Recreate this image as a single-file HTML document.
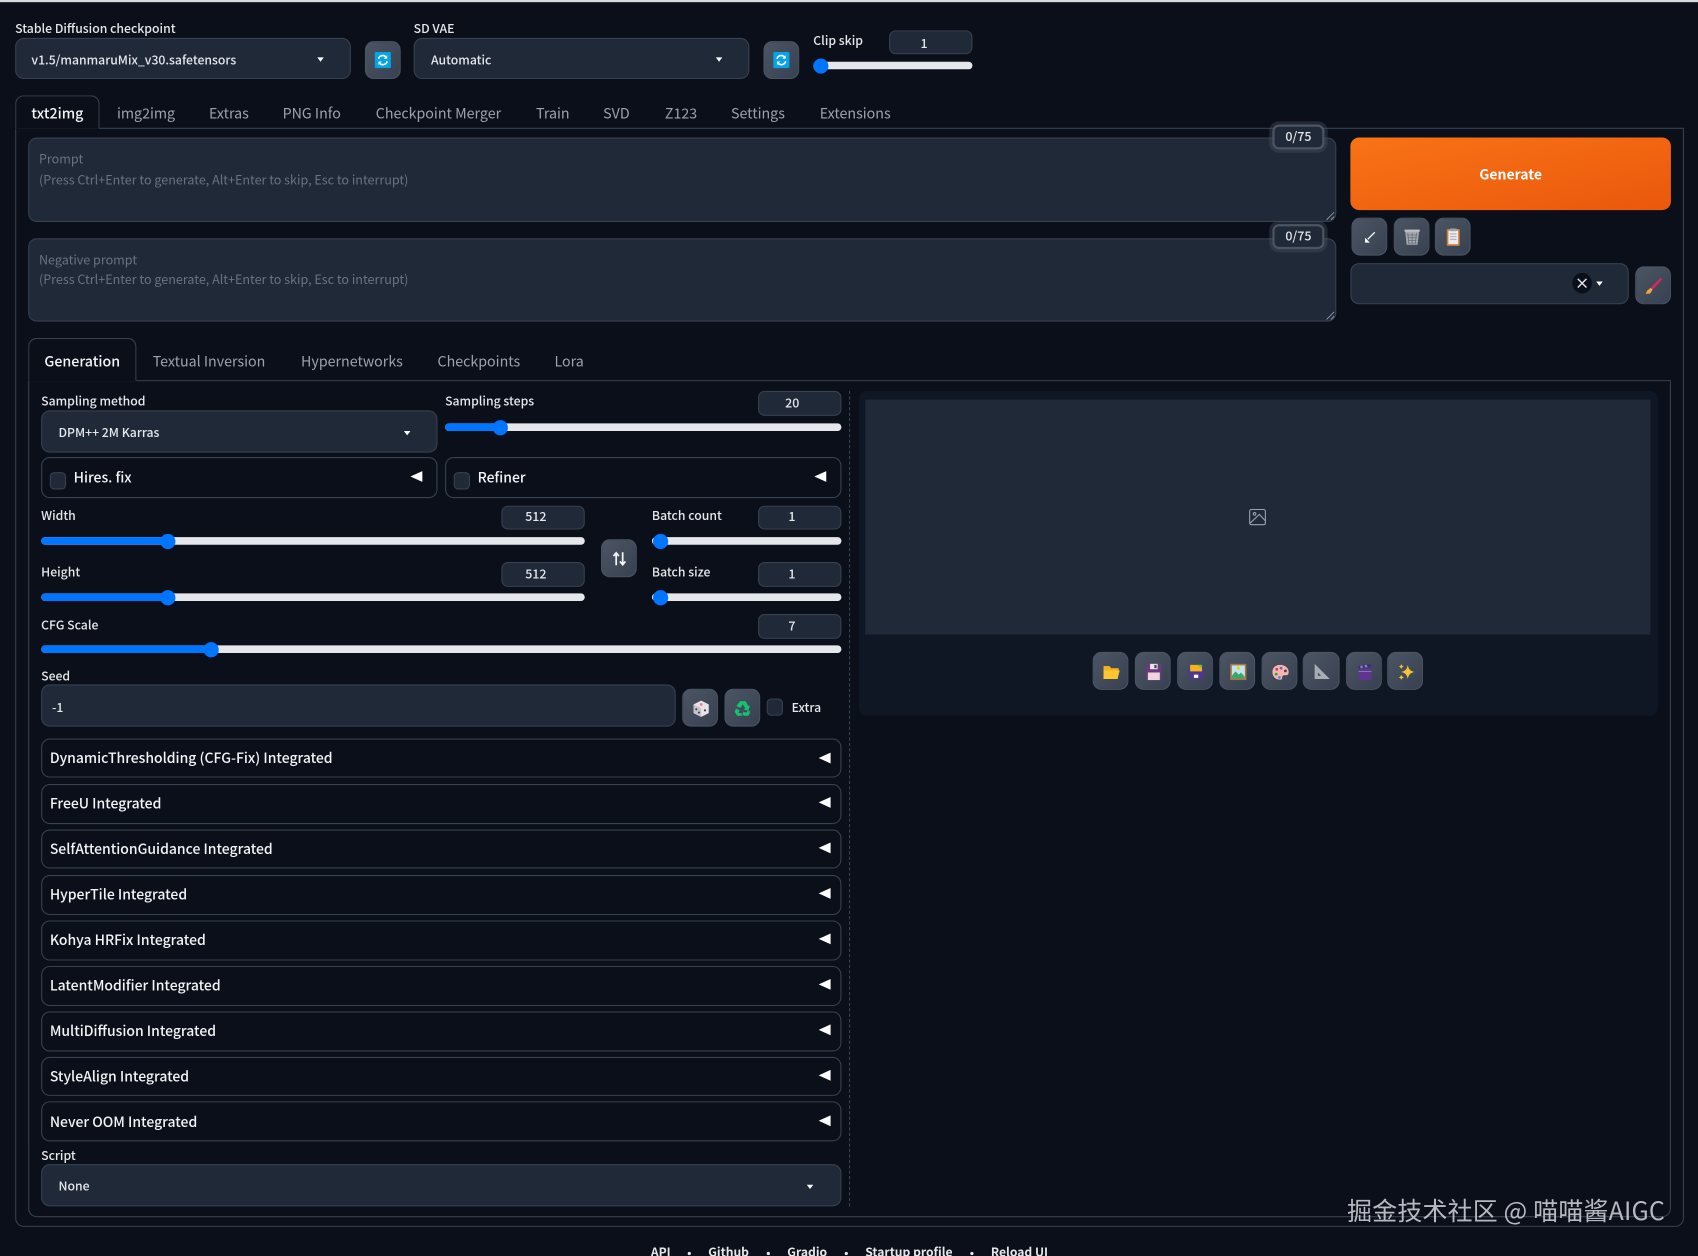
<!DOCTYPE html>
<html><head><meta charset="utf-8"><style>
html,body{margin:0;padding:0;background:#0b0f19;width:1698px;height:1256px;overflow:hidden}
#w{position:absolute;left:0;top:0;width:1568px;height:1160px;transform:scale(1.08291);transform-origin:0 0;font-family:"Noto Sans CJK SC","Liberation Sans",sans-serif;color:#f3f4f6;overflow:hidden}
#w div,#w svg,#w span{position:absolute;box-sizing:border-box}
.t{white-space:nowrap;line-height:1;transform:translateY(-50%);font-size:11.3px;letter-spacing:0;color:#e5e7eb;font-weight:500;margin-top:1.6px}
.tab{font-size:13.15px;color:#9ca3af;font-weight:400;margin-top:-.3px}
.ph{color:#6b7280;font-size:11.6px;font-weight:400;margin-top:1.8px}
.dd{background:#1f2937;border:1px solid #374151;border-radius:8px}
.arr{width:0;height:0;border-left:3.5px solid transparent;border-right:3.5px solid transparent;border-top:4px solid #fff}
.btn{background:linear-gradient(to bottom right,#4b5563,#374151);border:1px solid #4b5563;border-radius:8px;width:33px;height:35px}
.num{background:#1f2937;border:1px solid #374151;border-radius:6px;width:78px;height:22px}
.tr{height:7px;background:#e5e7eb;border-radius:4px}
.fill{left:0;top:0;height:7px;background:#0075ff;border-radius:4px}
.th{width:14px;height:14px;border-radius:50%;background:#0075ff;top:-3.5px}
.box{border:1px solid #374151;border-radius:8px}
.acc{left:38px;width:739px;border:1px solid #374151;border-radius:8px}
.tri{width:0;height:0;border-top:5px solid transparent;border-bottom:5px solid transparent;border-right:11px solid #fff}
.cb{width:15px;height:16px;background:#1f2937;border:1px solid #374151;border-radius:4px}
.acct{font-size:12.9px;color:#f3f4f6;margin-top:-.2px}
.n{font-size:11.5px;margin-top:.8px}
.foot{font-size:11.2px;font-weight:700;color:#e5e7eb;margin-top:0}
.dot{width:3px;height:3px;border-radius:50%;background:#e5e7eb;top:1156px}
.cnt{width:48px;height:23px;background:#1f2937;border:2px solid #4b5563;border-radius:6px;box-shadow:0 0 0 3px rgba(75,85,99,.35);font-size:11.5px;font-weight:500;text-align:center;line-height:19px;color:#e5e7eb}
</style></head><body><div id="w">
<div style="left:0;top:0;width:1568px;height:2px;background:#d8dae0"></div>

<!-- top row -->
<div class="t" style="left:14px;top:25px">Stable Diffusion checkpoint</div>
<div class="dd" style="left:14px;top:35px;width:310px;height:38px"></div>
<div class="t" style="left:29px;top:54px">v1.5/manmaruMix_v30.safetensors</div>
<div class="arr" style="left:293px;top:53px"></div>
<div class="btn" style="left:337px;top:38px"><svg style="left:8px;top:9px" width="15" height="15" viewBox="0 0 15 15"><rect width="15" height="15" rx="1.5" fill="#04a5e8"/><path d="M3.5 6.5A4 4 0 0 1 11 5.5M11.5 8.5A4 4 0 0 1 4 9.5" stroke="#fff" stroke-width="1.5" fill="none"/><path d="M11.5 3v3.2H8.4zM3.5 12V8.8h3.1z" fill="#fff"/></svg></div>

<div class="t" style="left:382px;top:25px">SD VAE</div>
<div class="dd" style="left:382px;top:35px;width:310px;height:38px"></div>
<div class="t" style="left:398px;top:54px">Automatic</div>
<div class="arr" style="left:661px;top:53px"></div>
<div class="btn" style="left:705px;top:38px"><svg style="left:8px;top:9px" width="15" height="15" viewBox="0 0 15 15"><rect width="15" height="15" rx="1.5" fill="#04a5e8"/><path d="M3.5 6.5A4 4 0 0 1 11 5.5M11.5 8.5A4 4 0 0 1 4 9.5" stroke="#fff" stroke-width="1.5" fill="none"/><path d="M11.5 3v3.2H8.4zM3.5 12V8.8h3.1z" fill="#fff"/></svg></div>

<div class="t" style="left:751px;top:36px">Clip skip</div>
<div class="num" style="left:821px;top:28px;width:77px"></div>
<div class="t n" style="left:850px;top:40px">1</div>
<div class="tr" style="left:751px;top:57px;width:147px"><div class="th" style="left:0"></div></div>

<!-- main tabs -->
<div style="left:14px;top:118px;width:1541px;height:1015px;border:1px solid #374151;border-radius:0 0 8px 8px"></div>
<div style="left:14px;top:88px;width:78px;height:31px;border:1px solid #374151;border-bottom:1px solid #0b0f19;border-radius:8px 8px 0 0;background:#0b0f19"></div>
<div class="t tab" style="left:29px;top:104px;color:#f3f4f6;font-weight:500">txt2img</div>
<div class="t tab" style="left:108px;top:104px">img2img</div>
<div class="t tab" style="left:193px;top:104px">Extras</div>
<div class="t tab" style="left:261px;top:104px">PNG Info</div>
<div class="t tab" style="left:347px;top:104px">Checkpoint Merger</div>
<div class="t tab" style="left:495px;top:104px">Train</div>
<div class="t tab" style="left:557px;top:104px">SVD</div>
<div class="t tab" style="left:614px;top:104px">Z123</div>
<div class="t tab" style="left:675px;top:104px">Settings</div>
<div class="t tab" style="left:757px;top:104px">Extensions</div>

<!-- prompts -->
<div class="dd" style="left:26px;top:127px;width:1208px;height:78px"></div>
<div class="t ph" style="left:36px;top:146px">Prompt</div>
<div class="t ph" style="left:36px;top:165px">(Press Ctrl+Enter to generate, Alt+Enter to skip, Esc to interrupt)</div>
<svg style="left:1224px;top:195px" width="9" height="9" viewBox="0 0 9 9"><path d="M1 8L8 1M5 8L8 5" stroke="#9ca3af" stroke-width=".8"/></svg>
<div class="cnt" style="left:1175px;top:115px">0/75</div>

<div class="dd" style="left:26px;top:220px;width:1208px;height:77px"></div>
<div class="t ph" style="left:36px;top:239px">Negative prompt</div>
<div class="t ph" style="left:36px;top:257px">(Press Ctrl+Enter to generate, Alt+Enter to skip, Esc to interrupt)</div>
<svg style="left:1224px;top:287px" width="9" height="9" viewBox="0 0 9 9"><path d="M1 8L8 1M5 8L8 5" stroke="#9ca3af" stroke-width=".8"/></svg>
<div class="cnt" style="left:1175px;top:207px">0/75</div>

<!-- generate -->
<div style="left:1247px;top:127px;width:296px;height:67px;border-radius:8px;background:linear-gradient(to bottom right,#f97316,#ea580c)"></div>
<div class="t" style="left:1247px;width:296px;text-align:center;top:161px;font-size:12.9px;font-weight:700;color:#fff;margin-top:.3px">Generate</div>
<div class="btn" style="left:1248px;top:201px"><svg style="left:8px;top:9px" width="16" height="16" viewBox="0 0 16 16"><path d="M12.500 3.500L6 10" stroke="#fff" stroke-width="1.200"/><path d="M3.500 13V8.500L8 13z" fill="#fff"/></svg></div>
<div class="btn" style="left:1287px;top:201px"><svg style="left:7px;top:8px" width="18" height="18" viewBox="0 0 18 18"><path d="M2.500 3h13l-1.500 13h-10z" fill="#a6aaae"/><path d="M5 5l1 10M9 5v10M13 5l-1 10M4 7h10M4.500 9.500h9M5 12h8M5 14.500h8" stroke="#676d76" stroke-width=".7"/><rect x="2" y="2" width="14" height="2" fill="#bdc0c4"/></svg></div>
<div class="btn" style="left:1325px;top:201px"><svg style="left:8px;top:8px" width="16" height="18" viewBox="0 0 16 18"><rect x="2" y="1.500" width="12" height="15.500" rx="1" fill="#c8803f"/><rect x="3.500" y="3" width="9" height="12.500" fill="#f1ecec"/><path d="M5 6h6M5 8.500h6M5 11h6" stroke="#a9a9b4" stroke-width="1"/><rect x="5" y="1" width="6" height="2.500" fill="#9ca3af"/></svg></div>
<div class="dd" style="left:1247px;top:243px;width:257px;height:38px"></div>
<div style="left:1452px;top:252px;width:18px;height:19px;border-radius:50%;background:#0b0f19"></div>
<svg style="left:1456px;top:256px" width="10" height="11" viewBox="0 0 10 11"><path d="M1 1.500l8 8M9 1.500l-8 8" stroke="#e5e7eb" stroke-width="1.300"/></svg>
<div class="arr" style="left:1474px;top:260px"></div>
<div class="btn" style="left:1510px;top:246px"><svg style="left:7px;top:8px" width="18" height="18" viewBox="0 0 18 18"><path d="M15.500 1.500L6.500 10.500l1.800 1.800L16.800 3z" fill="#e0245e"/><path d="M6.300 10.800L3 13.500 1.800 16.500l4-.5 2.300-3.500z" fill="#f4a63a"/></svg></div>

<!-- sub tabs -->
<div style="left:26px;top:351px;width:1517px;height:773px;border:1px solid #374151;border-radius:0 0 8px 8px"></div>
<div style="left:26px;top:312px;width:100px;height:40px;border:1px solid #374151;border-bottom:1px solid #0b0f19;border-radius:8px 8px 0 0;background:#0b0f19"></div>
<div class="t tab" style="left:41px;top:333px;color:#f3f4f6;font-weight:500">Generation</div>
<div class="t tab" style="left:141px;top:333px">Textual Inversion</div>
<div class="t tab" style="left:278px;top:333px">Hypernetworks</div>
<div class="t tab" style="left:404px;top:333px">Checkpoints</div>
<div class="t tab" style="left:512px;top:333px">Lora</div>

<!-- sampling -->
<div class="t" style="left:38px;top:369px">Sampling method</div>
<div class="dd" style="left:38px;top:379px;width:366px;height:39px"></div>
<div class="t" style="left:54px;top:398px">DPM++ 2M Karras</div>
<div class="arr" style="left:373px;top:398px"></div>
<div class="t" style="left:411px;top:369px">Sampling steps</div>
<div class="num" style="left:700px;top:361px;width:77px;height:23px"></div>
<div class="t n" style="left:725px;top:372.500px">20</div>
<div class="tr" style="left:411px;top:391px;width:366px"><div class="fill" style="width:52px"></div><div class="th" style="left:44px"></div></div>

<div class="box" style="left:38px;top:422px;width:366px;height:38px"></div>
<div class="cb" style="left:46px;top:436px"></div>
<div class="t acct" style="left:68px;top:441px">Hires. fix</div>
<div class="tri" style="left:379px;top:435px"></div>
<div class="box" style="left:411px;top:422px;width:366px;height:38px"></div>
<div class="cb" style="left:419px;top:436px"></div>
<div class="t acct" style="left:441px;top:441px">Refiner</div>
<div class="tri" style="left:752px;top:435px"></div>

<div class="t" style="left:38px;top:475px">Width</div>
<div class="num" style="left:463px;top:467px;width:77px;height:22px"></div>
<div class="t n" style="left:485px;top:477.500px">512</div>
<div class="tr" style="left:38px;top:496px;width:502px"><div class="fill" style="width:118px"></div><div class="th" style="left:110px"></div></div>
<div class="t" style="left:38px;top:527px">Height</div>
<div class="num" style="left:463px;top:519px;width:77px;height:23px"></div>
<div class="t n" style="left:485px;top:530px">512</div>
<div class="tr" style="left:38px;top:548px;width:502px"><div class="fill" style="width:118px"></div><div class="th" style="left:110px"></div></div>
<div class="btn" style="left:555px;top:498px;height:35px"><svg style="left:9px;top:10px" width="14" height="14" viewBox="0 0 14 14"><path d="M4 13V2M1.500 4.500L4 1.500l2.500 3M10 1v11M7.500 9.500l2.500 3 2.500-3" stroke="#f3f4f6" stroke-width="1.600" fill="none"/></svg></div>
<div class="t" style="left:602px;top:475px">Batch count</div>
<div class="num" style="left:700px;top:467px;width:77px;height:22px"></div>
<div class="t n" style="left:728px;top:477.500px">1</div>
<div class="tr" style="left:602px;top:496px;width:175px"><div class="th" style="left:1px"></div></div>
<div class="t" style="left:602px;top:527px">Batch size</div>
<div class="num" style="left:700px;top:519px;width:77px;height:23px"></div>
<div class="t n" style="left:728px;top:530px">1</div>
<div class="tr" style="left:602px;top:548px;width:175px"><div class="th" style="left:1px"></div></div>
<div class="t" style="left:38px;top:576px">CFG Scale</div>
<div class="num" style="left:700px;top:567px;width:77px;height:23px"></div>
<div class="t n" style="left:728px;top:578px">7</div>
<div class="tr" style="left:38px;top:596px;width:739px"><div class="fill" style="width:158px"></div><div class="th" style="left:150px"></div></div>

<div class="t" style="left:38px;top:623px">Seed</div>
<div class="dd" style="left:38px;top:632px;width:586px;height:39px"></div>
<div class="t" style="left:48px;top:652px">-1</div>
<div class="btn" style="left:630px;top:636px"><svg style="left:8px;top:9px" width="17" height="17" viewBox="0 0 17 17"><path d="M8.500 1L15.500 4.500V12.500L8.500 16L1.500 12.500V4.500z" fill="#e8e3e6"/><path d="M1.500 4.500L8.500 8V16L1.500 12.500z" fill="#c9c3c8"/><circle cx="8.500" cy="4.500" r="1.300" fill="#e87d9c"/><circle cx="4" cy="9" r="1" fill="#4a3b57"/><circle cx="6.500" cy="12" r="1" fill="#4a3b57"/><circle cx="12" cy="10" r="1" fill="#4a3b57"/></svg></div>
<div class="btn" style="left:669px;top:636px"><svg style="left:7px;top:8px" width="18" height="18" viewBox="0 0 18 18"><path d="M6.500 2.500h5L14 7l1.500-.5L14 11.500 9.500 10l1.800-.8L9 5.300 6.800 8.800 3 7z" fill="#16c172"/><path d="M2.500 9.200l3.500 1.600L4.800 13.500H8V16H3.800L1.500 12.500zM9.500 12.500l-.1-1.800L8.600 17l-.1-2.500L10 16h4l2-3.800-2.300-1.200-1.200 2z" fill="#16c172"/></svg></div>
<div class="cb" style="left:708px;top:645px"></div>
<div class="t" style="left:731px;top:652px">Extra</div>

<!-- accordions -->
<div class="acc" style="top:682px;height:36px"></div><div class="t acct" style="left:46px;top:700px">DynamicThresholding (CFG-Fix) Integrated</div><div class="tri" style="left:756px;top:695px"></div>
<div class="acc" style="top:724px;height:37px"></div><div class="t acct" style="left:46px;top:742px">FreeU Integrated</div><div class="tri" style="left:756px;top:736px"></div>
<div class="acc" style="top:766px;height:36px"></div><div class="t acct" style="left:46px;top:784px">SelfAttentionGuidance Integrated</div><div class="tri" style="left:756px;top:778px"></div>
<div class="acc" style="top:808px;height:37px"></div><div class="t acct" style="left:46px;top:826px">HyperTile Integrated</div><div class="tri" style="left:756px;top:820px"></div>
<div class="acc" style="top:850px;height:37px"></div><div class="t acct" style="left:46px;top:868px">Kohya HRFix Integrated</div><div class="tri" style="left:756px;top:862px"></div>
<div class="acc" style="top:892px;height:37px"></div><div class="t acct" style="left:46px;top:910px">LatentModifier Integrated</div><div class="tri" style="left:756px;top:904px"></div>
<div class="acc" style="top:934px;height:37px"></div><div class="t acct" style="left:46px;top:952px">MultiDiffusion Integrated</div><div class="tri" style="left:756px;top:946px"></div>
<div class="acc" style="top:976px;height:36px"></div><div class="t acct" style="left:46px;top:994px">StyleAlign Integrated</div><div class="tri" style="left:756px;top:988px"></div>
<div class="acc" style="top:1017px;height:37px"></div><div class="t acct" style="left:46px;top:1036px">Never OOM Integrated</div><div class="tri" style="left:756px;top:1030px"></div>

<div class="t" style="left:38px;top:1066px">Script</div>
<div class="dd" style="left:38px;top:1075px;width:739px;height:39px"></div>
<div class="t" style="left:54px;top:1094px">None</div>
<div class="arr" style="left:745px;top:1094px"></div>

<div style="left:784px;top:361px;width:0;height:753px;border-left:1px dashed #374151"></div>

<!-- output panel -->
<div style="left:793px;top:361px;width:738px;height:300px;background:#101724;border-radius:8px"></div>
<div style="left:799px;top:369px;width:725px;height:217px;background:#1f2937"></div>
<svg style="left:1153px;top:469px" width="17" height="17" viewBox="0 0 17 17" fill="none" stroke="#9ca3af" stroke-width="1"><rect x="1" y="1.500" width="14.500" height="14" rx="1.500"/><circle cx="5.500" cy="5.500" r="1.200"/><path d="M1.500 14L10 6l5.500 6"/></svg>

<div class="btn" style="left:1009px;top:602px"><svg style="left:8px;top:9px" width="17" height="17" viewBox="0 0 17 17"><path d="M1 3h5.500l1.500 2H15v3H1z" fill="#f0b020"/><path d="M1 15V7h15l-2 8z" fill="#fdc62e"/></svg></div>
<div class="btn" style="left:1048px;top:602px"><svg style="left:8px;top:9px" width="17" height="17" viewBox="0 0 17 17"><rect x="1.500" y="1" width="14" height="15" rx="1" fill="#6b3a7e"/><rect x="5" y="1" width="7" height="5" fill="#e8e3e6"/><rect x="9" y="2" width="2" height="3" fill="#4a3b57"/><rect x="3" y="9" width="11" height="7" fill="#f2d5dc"/></svg></div>
<div class="btn" style="left:1087px;top:602px"><svg style="left:8px;top:9px" width="17" height="17" viewBox="0 0 17 17"><rect x="1.500" y="5" width="14" height="10" rx="1" fill="#4f3690"/><path d="M3 2h11v6H3z" fill="#f4b41a"/><path d="M9 2l5 0v3z" fill="#6dbb4d"/><rect x="6.500" y="11" width="4" height="3" fill="#fff"/></svg></div>
<div class="btn" style="left:1126px;top:602px"><svg style="left:8px;top:9px" width="17" height="17" viewBox="0 0 17 17"><rect x="1" y="1" width="15" height="15" fill="#a8763e"/><rect x="2.500" y="2.500" width="12" height="12" fill="#bfe7f2"/><circle cx="8.500" cy="5" r="1.500" fill="#f4c531"/><path d="M2.500 12L6 8l3 3 2-2 3.500 4v1.500h-12z" fill="#3aa76d"/></svg></div>
<div class="btn" style="left:1165px;top:602px"><svg style="left:8px;top:9px" width="17" height="17" viewBox="0 0 17 17"><path d="M8 2c5 0 8 3 8 6.500s-2.500 3-4 3-2 1-2 2.500-1 2-3 1.500C3 15 1 12 1 8.500S3.500 2 8 2z" fill="#f5b7ad"/><circle cx="5" cy="6" r="1.300" fill="#d6336c"/><circle cx="9" cy="5" r="1.300" fill="#7b5cc4"/><circle cx="13" cy="7.500" r="1.300" fill="#4a3b57"/><circle cx="4.500" cy="10.500" r="1.300" fill="#2f9e44"/><circle cx="7.500" cy="13.500" r="1.200" fill="#3b82f6"/></svg></div>
<div class="btn" style="left:1203px;top:602px;width:34px"><svg style="left:9px;top:9px" width="16" height="16" viewBox="0 0 16 16"><path fill-rule="evenodd" d="M1 1l14 14H1zM4 9v3h3z" fill="#a9adb3"/></svg></div>
<div class="btn" style="left:1243px;top:602px"><svg style="left:8px;top:8px" width="17" height="18" viewBox="0 0 17 18"><rect x="2.500" y="7" width="12" height="10" fill="#5f3590"/><path d="M2.500 4l11.500-2 .5 3-12 2z" fill="#42306e"/><path d="M4 4l2-.4.6 2.200-2 .4zM8 3.300l2.200-.4.6 2.200-2.200.4z" fill="#8f78d9"/><path d="M2.500 9h12" stroke="#8f78c9" stroke-width=".8"/></svg></div>
<div class="btn" style="left:1281px;top:602px"><svg style="left:8px;top:9px" width="17" height="17" viewBox="0 0 17 17"><path d="M10 2c.8 4 2 5.500 6 6.500-4 1-5.200 2.500-6 6.500-.8-4-2-5.500-6-6.500 4-1 5.200-2.500 6-6.500zM4 1c.3 1.500 1 2.200 2.500 2.500C5 3.800 4.300 4.500 4 6 3.700 4.500 3 3.800 1.500 3.500 3 3.200 3.700 2.500 4 1zM4 11c.3 1.500 1 2.200 2.500 2.500-1.500.3-2.200 1-2.500 2.500-.3-1.500-1-2.200-2.500-2.500C3 13.200 3.700 12.500 4 11z" fill="#f7c331"/></svg></div>

<!-- footer -->
<div class="t foot" style="left:601px;top:1157px">API</div><div class="dot" style="left:635px"></div>
<div class="t foot" style="left:654px;top:1157px">Github</div><div class="dot" style="left:708px"></div>
<div class="t foot" style="left:727px;top:1157px">Gradio</div><div class="dot" style="left:780px"></div>
<div class="t foot" style="left:799px;top:1157px">Startup profile</div><div class="dot" style="left:896px"></div>
<div class="t foot" style="left:915px;top:1157px">Reload UI</div>

<!-- watermark -->
<div class="t" style="left:1244px;top:1117px;margin-top:0;font-size:23px;letter-spacing:.2px;font-weight:400;color:rgba(220,223,228,.82)">掘金技术社区 @ 喵喵酱AIGC</div>
</div></body></html>
